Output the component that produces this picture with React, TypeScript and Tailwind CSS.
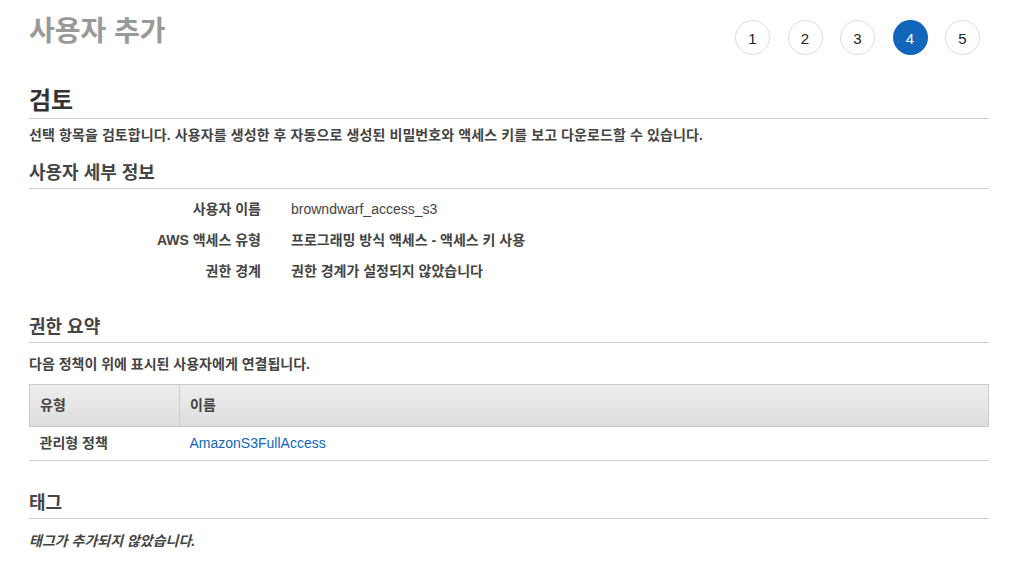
import React from 'react';

const steps = [1, 2, 3, 4, 5];

const font = "font-['Liberation_Sans','Noto_Sans_CJK_KR',sans-serif]";

const SectionHeading = ({ children }: { children: React.ReactNode }) => (
  <h3 className="text-[18px] font-bold text-[#444] leading-[24px] pb-[3px] border-b border-[#ccc]">
    {children}
  </h3>
);

const DetailRow = ({ label, value, bold }: { label: string; value: string; bold?: boolean }) => (
  <div className="flex h-[31px] items-center text-[14px]">
    <div className="w-[232px] text-right font-bold text-[#444]">{label}</div>
    <div className={bold ? 'ml-[30px] font-bold text-[#444]' : 'ml-[30px] text-[#444]'}>{value}</div>
  </div>
);

export default function App() {
  return (
    <div className={`${font} bg-white min-h-[580px] px-[29px] pr-[24px] text-[#444]`}>
      <div className="flex justify-between items-start pt-[12px]">
        <h1 className="text-[28px] font-bold text-[#999] leading-[40px]">사용자 추가</h1>
        <div className="flex gap-[17.5px] mt-[8px] mr-[9px]">
          {steps.map((s) => (
            <div
              key={s}
              className={
                s === 4
                  ? 'w-[35px] h-[35px] rounded-full bg-[#1166bb] text-white flex items-center justify-center text-[15px] pt-[3px]'
                  : 'w-[35px] h-[35px] rounded-full border border-[#ddd] text-[#222] flex items-center justify-center text-[15px] pt-[3px]'
              }
            >
              {s}
            </div>
          ))}
        </div>
      </div>

      <div className="w-[960px]">
        <h2 className="mt-[32px] text-[24px] font-bold text-[#333] leading-[28px] pb-[3px] border-b border-[#ccc]">
          검토
        </h2>
        <p className="mt-[6px] text-[14px] font-bold text-[#444] leading-[20px] tracking-[0.1px]">
          선택 항목을 검토합니다. 사용자를 생성한 후 자동으로 생성된 비밀번호와 액세스 키를 보고 다운로드할 수 있습니다.
        </p>

        <div className="mt-[16px]">
          <SectionHeading>사용자 세부 정보</SectionHeading>
        </div>
        <div className="mt-[5px]">
          <DetailRow label="사용자 이름" value="browndwarf_access_s3" />
          <DetailRow label="AWS 액세스 유형" value="프로그래밍 방식 액세스 - 액세스 키 사용" bold />
          <DetailRow label="권한 경계" value="권한 경계가 설정되지 않았습니다" bold />
        </div>

        <div className="mt-[28px]">
          <SectionHeading>권한 요약</SectionHeading>
        </div>
        <p className="mt-[11px] text-[14px] font-bold text-[#444] leading-[20px]">
          다음 정책이 위에 표시된 사용자에게 연결됩니다.
        </p>
        <table className="mt-[10px] w-full border-collapse text-[14px]">
          <thead>
            <tr className="bg-gradient-to-b from-[#eeeeee] to-[#dddddd]">
              <th className="w-[150px] h-[42px] border border-[#ccc] text-left px-[10px] font-bold text-[#444]">유형</th>
              <th className="h-[42px] border border-[#ccc] text-left px-[10px] font-bold text-[#444]">이름</th>
            </tr>
          </thead>
          <tbody>
            <tr className="border-b border-[#ccc]">
              <td className="h-[34px] px-[10px] font-bold text-[#444]">관리형 정책</td>
              <td className="h-[34px] px-[10px] text-[#1166bb]">AmazonS3FullAccess</td>
            </tr>
          </tbody>
        </table>

        <div className="mt-[30px]">
          <SectionHeading>태그</SectionHeading>
        </div>
        <p className="mt-[12px] text-[14px] font-bold italic text-[#444] leading-[20px]">태그가 추가되지 않았습니다.</p>
      </div>
    </div>
  );
}
